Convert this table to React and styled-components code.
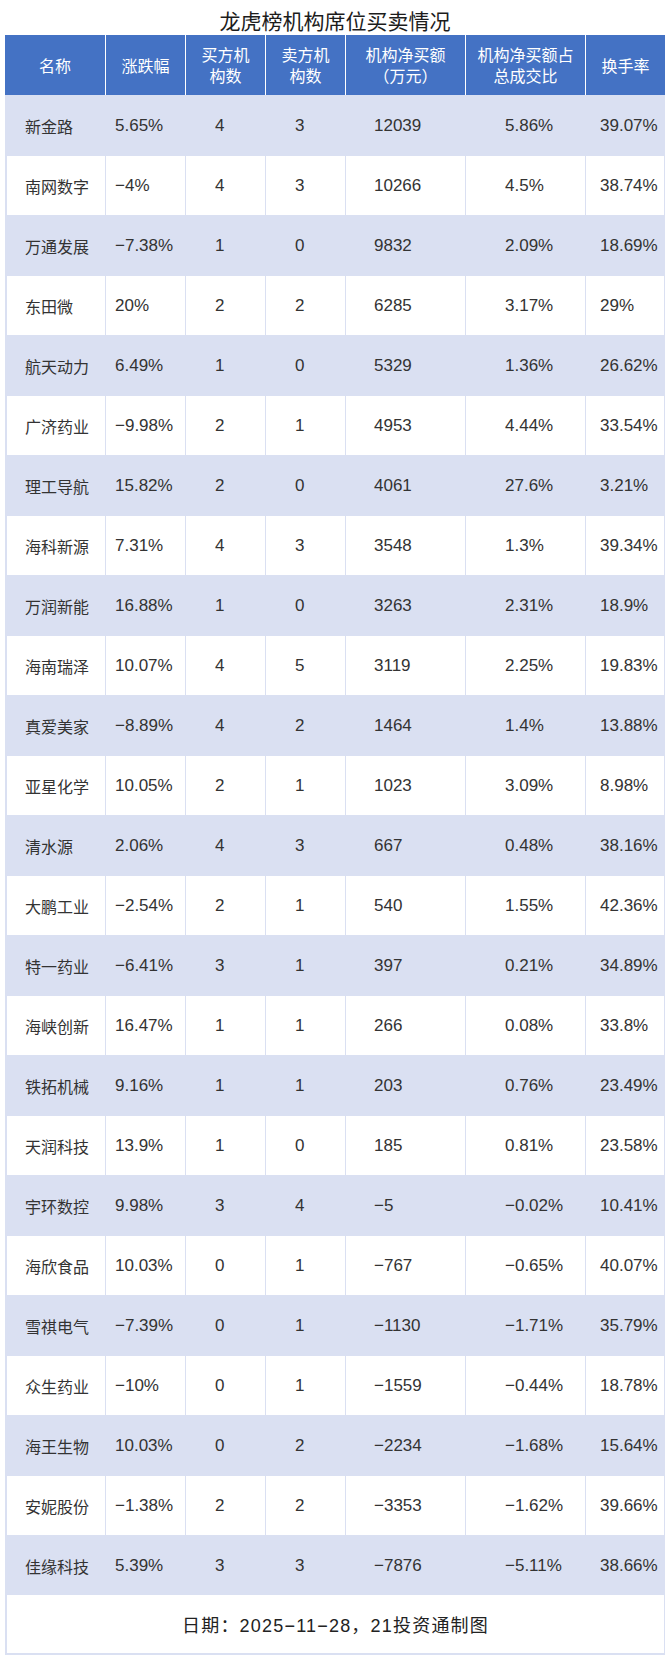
import React from "react";
import styled, { createGlobalStyle } from "styled-components";

const GlobalStyle = createGlobalStyle`
  html, body {
    margin: 0;
    padding: 0;
    background: #ffffff;
  }
  body {
    font-family: "Liberation Sans", "Noto Sans CJK SC", sans-serif;
    color: #333333;
  }
`;

const LAVENDER = "#dae0f2";
const BLUE = "#4472c4";

const columns = [
  { label: ["名称"], pad: 18 },
  { label: ["涨跌幅"], pad: 9 },
  { label: ["买方机", "构数"], pad: 29 },
  { label: ["卖方机", "构数"], pad: 29 },
  { label: ["机构净买额", "（万元）"], pad: 28 },
  { label: ["机构净买额占", "总成交比"], pad: 39 },
  { label: ["换手率"], pad: 14 },
];

const rows = [
  ["新金路", "5.65%", "4", "3", "12039", "5.86%", "39.07%"],
  ["南网数字", "−4%", "4", "3", "10266", "4.5%", "38.74%"],
  ["万通发展", "−7.38%", "1", "0", "9832", "2.09%", "18.69%"],
  ["东田微", "20%", "2", "2", "6285", "3.17%", "29%"],
  ["航天动力", "6.49%", "1", "0", "5329", "1.36%", "26.62%"],
  ["广济药业", "−9.98%", "2", "1", "4953", "4.44%", "33.54%"],
  ["理工导航", "15.82%", "2", "0", "4061", "27.6%", "3.21%"],
  ["海科新源", "7.31%", "4", "3", "3548", "1.3%", "39.34%"],
  ["万润新能", "16.88%", "1", "0", "3263", "2.31%", "18.9%"],
  ["海南瑞泽", "10.07%", "4", "5", "3119", "2.25%", "19.83%"],
  ["真爱美家", "−8.89%", "4", "2", "1464", "1.4%", "13.88%"],
  ["亚星化学", "10.05%", "2", "1", "1023", "3.09%", "8.98%"],
  ["清水源", "2.06%", "4", "3", "667", "0.48%", "38.16%"],
  ["大鹏工业", "−2.54%", "2", "1", "540", "1.55%", "42.36%"],
  ["特一药业", "−6.41%", "3", "1", "397", "0.21%", "34.89%"],
  ["海峡创新", "16.47%", "1", "1", "266", "0.08%", "33.8%"],
  ["铁拓机械", "9.16%", "1", "1", "203", "0.76%", "23.49%"],
  ["天润科技", "13.9%", "1", "0", "185", "0.81%", "23.58%"],
  ["宇环数控", "9.98%", "3", "4", "−5", "−0.02%", "10.41%"],
  ["海欣食品", "10.03%", "0", "1", "−767", "−0.65%", "40.07%"],
  ["雪祺电气", "−7.39%", "0", "1", "−1130", "−1.71%", "35.79%"],
  ["众生药业", "−10%", "0", "1", "−1559", "−0.44%", "18.78%"],
  ["海王生物", "10.03%", "0", "2", "−2234", "−1.68%", "15.64%"],
  ["安妮股份", "−1.38%", "2", "2", "−3353", "−1.62%", "39.66%"],
  ["佳缘科技", "5.39%", "3", "3", "−7876", "−5.11%", "38.66%"],
];

const Page = styled.div`
  width: 660px;
  padding: 0 5px 5px;
`;

const Title = styled.h1`
  margin: 0;
  height: 35px;
  box-sizing: border-box;
  padding-top: 11px;
  font-size: 21px;
  line-height: 22px;
  font-weight: 400;
  text-align: center;
  color: #1c1c1c;
`;

const Table = styled.div`
  display: flex;
  flex-direction: column;
  background: ${LAVENDER};
`;

const HeadRow = styled.div`
  display: grid;
  grid-template-columns: 100px 79px 79px 79px 119px 119px 79px;
  column-gap: 1px;
  height: 60px;
  background: #ffffff;
`;

const HeadCell = styled.div`
  display: flex;
  flex-direction: column;
  align-items: center;
  justify-content: center;
  background: ${BLUE};
  color: #ffffff;
  font-family: "Noto Sans CJK SC", sans-serif;
  font-size: 16px;
  line-height: 21px;
  font-feature-settings: "chws" 0, "halt" 0;
`;

const Row = styled.div`
  display: grid;
  grid-template-columns: 98px 79px 79px 79px 119px 119px 78px;
  column-gap: 1px;
  height: 60px;
  box-sizing: border-box;
  padding: 1px 1px 0 2px;
  background: ${LAVENDER};
`;

const Cell = styled.div`
  display: flex;
  align-items: center;
  padding-left: ${(p) => p.$pad}px;
  background: ${(p) => (p.$striped ? LAVENDER : "#ffffff")};
  font-size: ${(p) => (p.$name ? 16 : 17)}px;
  color: #333333;
  white-space: nowrap;
`;

const Footer = styled.div`
  height: 60px;
  box-sizing: border-box;
  border: solid ${LAVENDER};
  border-width: 0 1px 2px 2px;
  background: #ffffff;
  display: flex;
  align-items: center;
  justify-content: center;
  font-size: 18px;
  letter-spacing: 1.2px;
  color: #222222;
`;

export default function App() {
  return (
    <>
      <GlobalStyle />
      <Page>
        <Title>龙虎榜机构席位买卖情况</Title>
        <Table>
          <HeadRow>
            {columns.map((c, i) => (
              <HeadCell key={i}>
                {c.label.map((line) => (
                  <span key={line}>{line}</span>
                ))}
              </HeadCell>
            ))}
          </HeadRow>
          {rows.map((r, ri) => (
            <Row key={r[0]}>
              {r.map((v, ci) => (
                <Cell
                  key={ci}
                  $pad={columns[ci].pad}
                  $striped={ri % 2 === 0}
                  $name={ci === 0}
                >
                  {v}
                </Cell>
              ))}
            </Row>
          ))}
          <Footer>日期：2025−11−28，21投资通制图</Footer>
        </Table>
      </Page>
    </>
  );
}
